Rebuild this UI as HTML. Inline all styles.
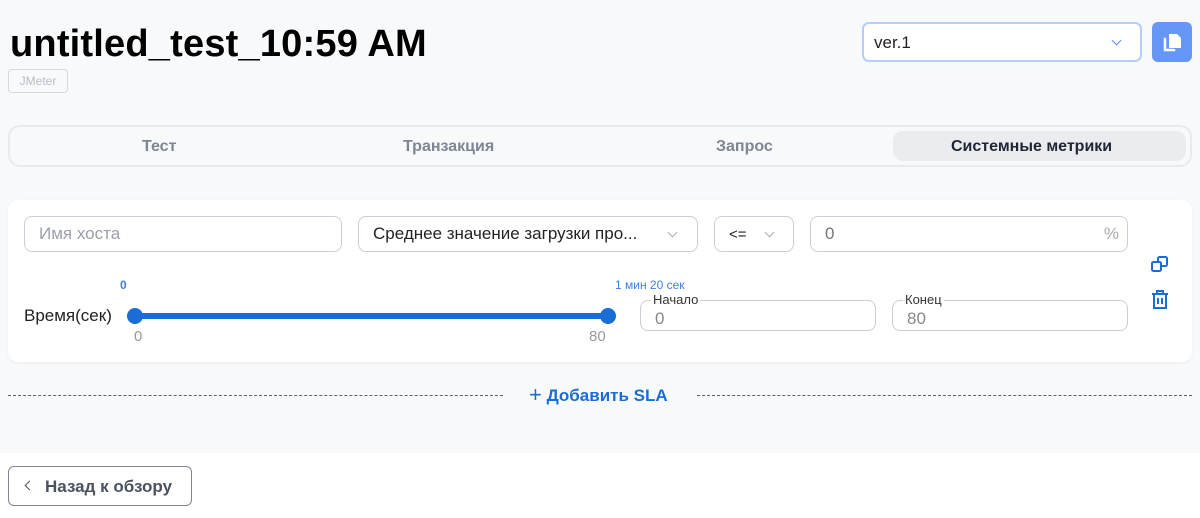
<!DOCTYPE html>
<html><head><meta charset="utf-8"><style>
*{box-sizing:border-box;margin:0;padding:0}
body{width:1200px;height:518px;background:#fff;font-family:"Liberation Sans",sans-serif;position:relative;overflow:hidden}
.a{position:absolute}
.top{left:0;top:0;width:1200px;height:453px;background:#f8f9fa}
.inp{position:absolute;border:1px solid #c9ced6;border-radius:8px;background:#fff;font-size:17px;color:#222;padding-left:14px;display:flex;align-items:center}
.chev{position:absolute;width:7px;height:7px;border-right:1.5px solid #a8adb6;border-bottom:1.5px solid #a8adb6;transform:rotate(45deg)}
.lbl{position:absolute;top:-8px;left:10px;background:#fff;padding:0 2px;font-size:13px;color:#333;line-height:14px}
</style></head><body>
<div class="a top"></div>
<div class="a" style="left:10px;top:23px;font-size:38px;font-weight:bold;color:#000;letter-spacing:0.2px">untitled_test_10:59 AM</div>
<div class="a" style="left:8px;top:69px;width:60px;height:24px;border:1px solid #d5d8e0;border-radius:4px;font-size:12px;color:#b8bcc6;text-align:center;line-height:22px">JMeter</div>
<div class="a" style="left:862px;top:22px;width:280px;height:40px;border:2px solid #b5cdfb;border-radius:7px;background:#fff;font-size:17px;color:#222;padding:9px 10px">ver.1</div>
<div class="chev" style="left:1113px;top:37px;border-color:#5b8ee8"></div>
<div class="a" style="left:1152px;top:22px;width:40px;height:40px;background:#6596f8;border-radius:6px">
<svg width="40" height="40" viewBox="0 0 40 40"><path d="M14 17h-1v11h9v-1" fill="none" stroke="#fff" stroke-width="2.5"/><path d="M17 12h8l4 4v10h-12z" fill="#fff"/></svg></div>
<div class="a" style="left:8px;top:125px;width:1184px;height:42px;border:2px solid #e8eaee;border-radius:12px"></div>
<div class="a" style="left:893px;top:131px;width:293px;height:30px;background:#ebecf0;border-radius:10px"></div>
<div class="a" style="left:0;top:138px;width:1200px;font-size:16px;font-weight:bold;color:#7d8694">
<span class="a" style="left:142px">Тест</span><span class="a" style="left:403px">Транзакция</span><span class="a" style="left:716px">Запрос</span><span class="a" style="left:951px;color:#1f2533">Системные метрики</span></div>
<div class="a" style="left:8px;top:200px;width:1184px;height:162px;background:#fff;border-radius:10px;box-shadow:0 1px 3px rgba(0,0,0,0.05)"></div>
<div class="inp" style="left:24px;top:216px;width:318px;height:36px;color:#9aa0aa">Имя хоста</div>
<div class="inp" style="left:358px;top:216px;width:340px;height:36px">Среднее значение загрузки про...</div>
<div class="chev" style="left:669px;top:229px"></div>
<div class="inp" style="left:714px;top:216px;width:80px;height:36px;font-size:15px">&lt;=</div>
<div class="chev" style="left:766px;top:229px"></div>
<div class="inp" style="left:810px;top:216px;width:318px;height:36px;color:#777">0<span class="a" style="right:8px;color:#aaa">%</span></div>
<div class="a" style="left:24px;top:306px;font-size:17px;color:#222">Время(сек)</div>
<div class="a" style="left:120px;top:278px;font-size:12px;font-weight:bold;color:#3f7fdc">0</div>
<div class="a" style="left:615px;top:278px;font-size:12px;color:#3f7fdc">1 мин 20 сек</div>
<div class="a" style="left:135px;top:313px;width:473px;height:6px;background:#1a6dd6"></div>
<div class="a" style="left:127px;top:308px;width:16px;height:16px;border-radius:50%;background:#1a6dd6"></div>
<div class="a" style="left:600px;top:308px;width:16px;height:16px;border-radius:50%;background:#1a6dd6"></div>
<div class="a" style="left:134px;top:328px;font-size:15px;color:#999">0</div>
<div class="a" style="left:589px;top:328px;font-size:15px;color:#999">80</div>
<div class="inp" style="left:640px;top:300px;width:236px;height:31px;color:#888;padding-top:6px"><div class="lbl">Начало</div>0</div>
<div class="inp" style="left:892px;top:300px;width:236px;height:31px;color:#888;padding-top:6px"><div class="lbl">Конец</div>80</div>
<svg class="a" style="left:1150px;top:254px" width="20" height="20" viewBox="0 0 20 20" fill="none" stroke="#1a6dd6" stroke-width="2"><rect x="2" y="8" width="9" height="9" rx="1.5"/><path d="M8 8V4.5A1.5 1.5 0 0 1 9.5 3h6A1.5 1.5 0 0 1 17 4.5v6a1.5 1.5 0 0 1-1.5 1.5H11"/></svg>
<svg class="a" style="left:1150px;top:289px" width="20" height="22" viewBox="0 0 20 22" fill="none" stroke="#1a6dd6" stroke-width="2"><path d="M2 5h16M7 5V2h6v3M4 5v14h12V5M8 9v6M12 9v6"/></svg>
<div class="a" style="left:8px;top:395px;width:495px;border-top:1px dashed #5a6270"></div>
<div class="a" style="left:697px;top:395px;width:495px;border-top:1px dashed #5a6270"></div>
<div class="a" style="left:529px;top:381px;font-size:17px;font-weight:bold;color:#1a6dd6"><span style="font-size:22px;font-weight:normal;position:relative;top:1px">+</span> Добавить SLA</div>
<div class="a" style="left:8px;top:466px;width:184px;height:40px;border:1px solid #7f8591;border-radius:6px;font-size:17px;font-weight:bold;color:#4a5260;padding:10px 0 0 36px">Назад к обзору</div>
<div class="chev" style="left:26px;top:482px;transform:rotate(135deg);border-color:#4a5260"></div>
</body></html>
